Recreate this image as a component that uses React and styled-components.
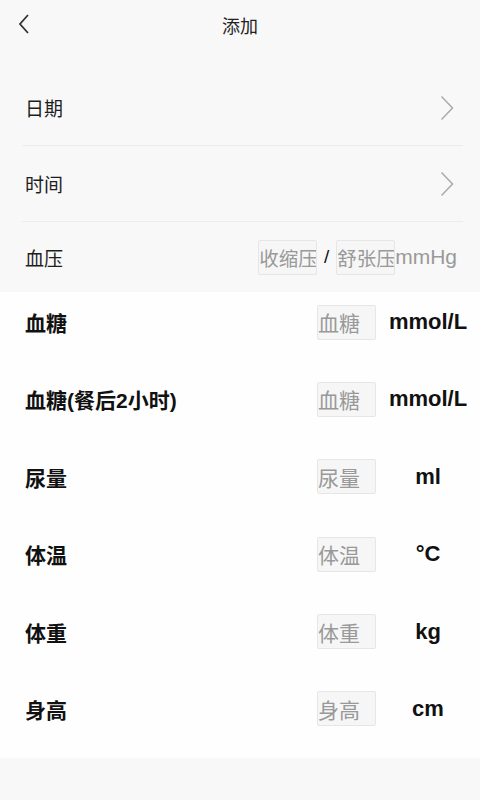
import React from "react";
import styled, { createGlobalStyle } from "styled-components";

// GLOBAL
const GlobalStyle = createGlobalStyle`
  html, body {
    margin: 0;
    padding: 0;
    background: #f8f8f8;
  }
  body {
    font-family: "Liberation Sans", "Noto Sans CJK SC", sans-serif;
    color: #222;
  }
  * {
    box-sizing: border-box;
  }
`;

// STYLED COMPONENT
const Page = styled.div`
  width: 480px;
  min-height: 800px;
  background: #f8f8f8;
  display: flex;
  flex-direction: column;
`;

const Header = styled.header`
  height: 50px;
  display: flex;
  align-items: center;
  justify-content: center;
  position: relative;
`;

const BackBtn = styled.button`
  position: absolute;
  left: 12px;
  top: 11px;
  width: 24px;
  height: 26px;
  padding: 0;
  border: none;
  background: none;
  display: flex;
  align-items: center;
  justify-content: center;
`;

const Title = styled.h1`
  margin: 0;
  font-size: 18px;
  font-weight: 400;
  color: #222;
`;

const TopList = styled.section`
  margin-top: 20px;
  padding: 0 17px 0 22px;
  display: flex;
  flex-direction: column;
`;

const TopRow = styled.div`
  height: ${(props) => props.$h}px;
  display: flex;
  align-items: center;
  justify-content: space-between;
  padding-left: 3px;
  border-bottom: ${(props) => (props.$last ? "none" : "1px solid #ececec")};
`;

const TopLabel = styled.span`
  font-size: 19px;
  color: #1e1e1e;
`;

const Arrow = styled.span`
  display: flex;
  padding-right: 9px;
`;

const PressureGroup = styled.div`
  display: flex;
  align-items: center;
  padding-right: 6px;
`;

const Slash = styled.span`
  width: 19px;
  text-align: center;
  font-size: 19px;
  color: #111;
`;

const GreyUnit = styled.span`
  font-size: 21px;
  color: #9a9a9a;
`;

const Box = styled.div`
  width: ${(props) => props.$w}px;
  height: 35px;
  border: 1px solid #e6e6e6;
  border-radius: 2px;
  background: #f6f6f6;
  font-size: ${(props) => props.$fs}px;
  color: #999;
  display: flex;
  align-items: center;
  white-space: nowrap;
  overflow: hidden;
`;

const MeasureList = styled.section`
  background: #fefefe;
  padding: 12px 0 31px 25px;
  display: flex;
  flex-direction: column;
  gap: 41.4px;
`;

const MeasureRow = styled.div`
  height: 36px;
  display: flex;
  align-items: center;
`;

const MeasureLabel = styled.span`
  flex: 1;
  font-size: 21px;
  font-weight: 700;
  color: #111;
`;

const UnitCell = styled.span`
  width: 80px;
  margin: 0 12px;
  text-align: center;
  font-size: 22px;
  font-weight: 700;
  color: #111;
`;

// ICONS
const ChevronLeft = () => (
  <svg width="12" height="20" viewBox="0 0 12 20">
    <path d="M10 1 L2 10 L10 19" fill="none" stroke="#333" strokeWidth="1.8" />
  </svg>
);

const ChevronRight = () => (
  <svg width="14" height="26" viewBox="0 0 14 26">
    <path d="M1.5 1.5 L12.5 13 L1.5 24.5" fill="none" stroke="#aaa" strokeWidth="1.5" />
  </svg>
);

// DATA
const measures = [
  { label: "血糖", hint: "血糖", unit: "mmol/L" },
  { label: "血糖(餐后2小时)", hint: "血糖", unit: "mmol/L" },
  { label: "尿量", hint: "尿量", unit: "ml" },
  { label: "体温", hint: "体温", unit: "°C" },
  { label: "体重", hint: "体重", unit: "kg" },
  { label: "身高", hint: "身高", unit: "cm" },
];

// MAIN COMPONENT
export default function App() {
  return (
    <>
      <GlobalStyle />
      <Page>
        <Header>
          <BackBtn>
            <ChevronLeft />
          </BackBtn>
          <Title>添加</Title>
        </Header>

        <TopList>
          <TopRow $h={76}>
            <TopLabel>日期</TopLabel>
            <Arrow>
              <ChevronRight />
            </Arrow>
          </TopRow>
          <TopRow $h={76}>
            <TopLabel>时间</TopLabel>
            <Arrow>
              <ChevronRight />
            </Arrow>
          </TopRow>
          <TopRow $h={70} $last>
            <TopLabel>血压</TopLabel>
            <PressureGroup>
              <Box $w={59} $fs={19.5}>收缩压</Box>
              <Slash>/</Slash>
              <Box $w={59} $fs={19.5}>舒张压</Box>
              <GreyUnit>mmHg</GreyUnit>
            </PressureGroup>
          </TopRow>
        </TopList>

        <MeasureList>
          {measures.map((m, i) => (
            <MeasureRow key={i}>
              <MeasureLabel>{m.label}</MeasureLabel>
              <Box $w={59} $fs={21}>{m.hint}</Box>
              <UnitCell>{m.unit}</UnitCell>
            </MeasureRow>
          ))}
        </MeasureList>
      </Page>
    </>
  );
}
